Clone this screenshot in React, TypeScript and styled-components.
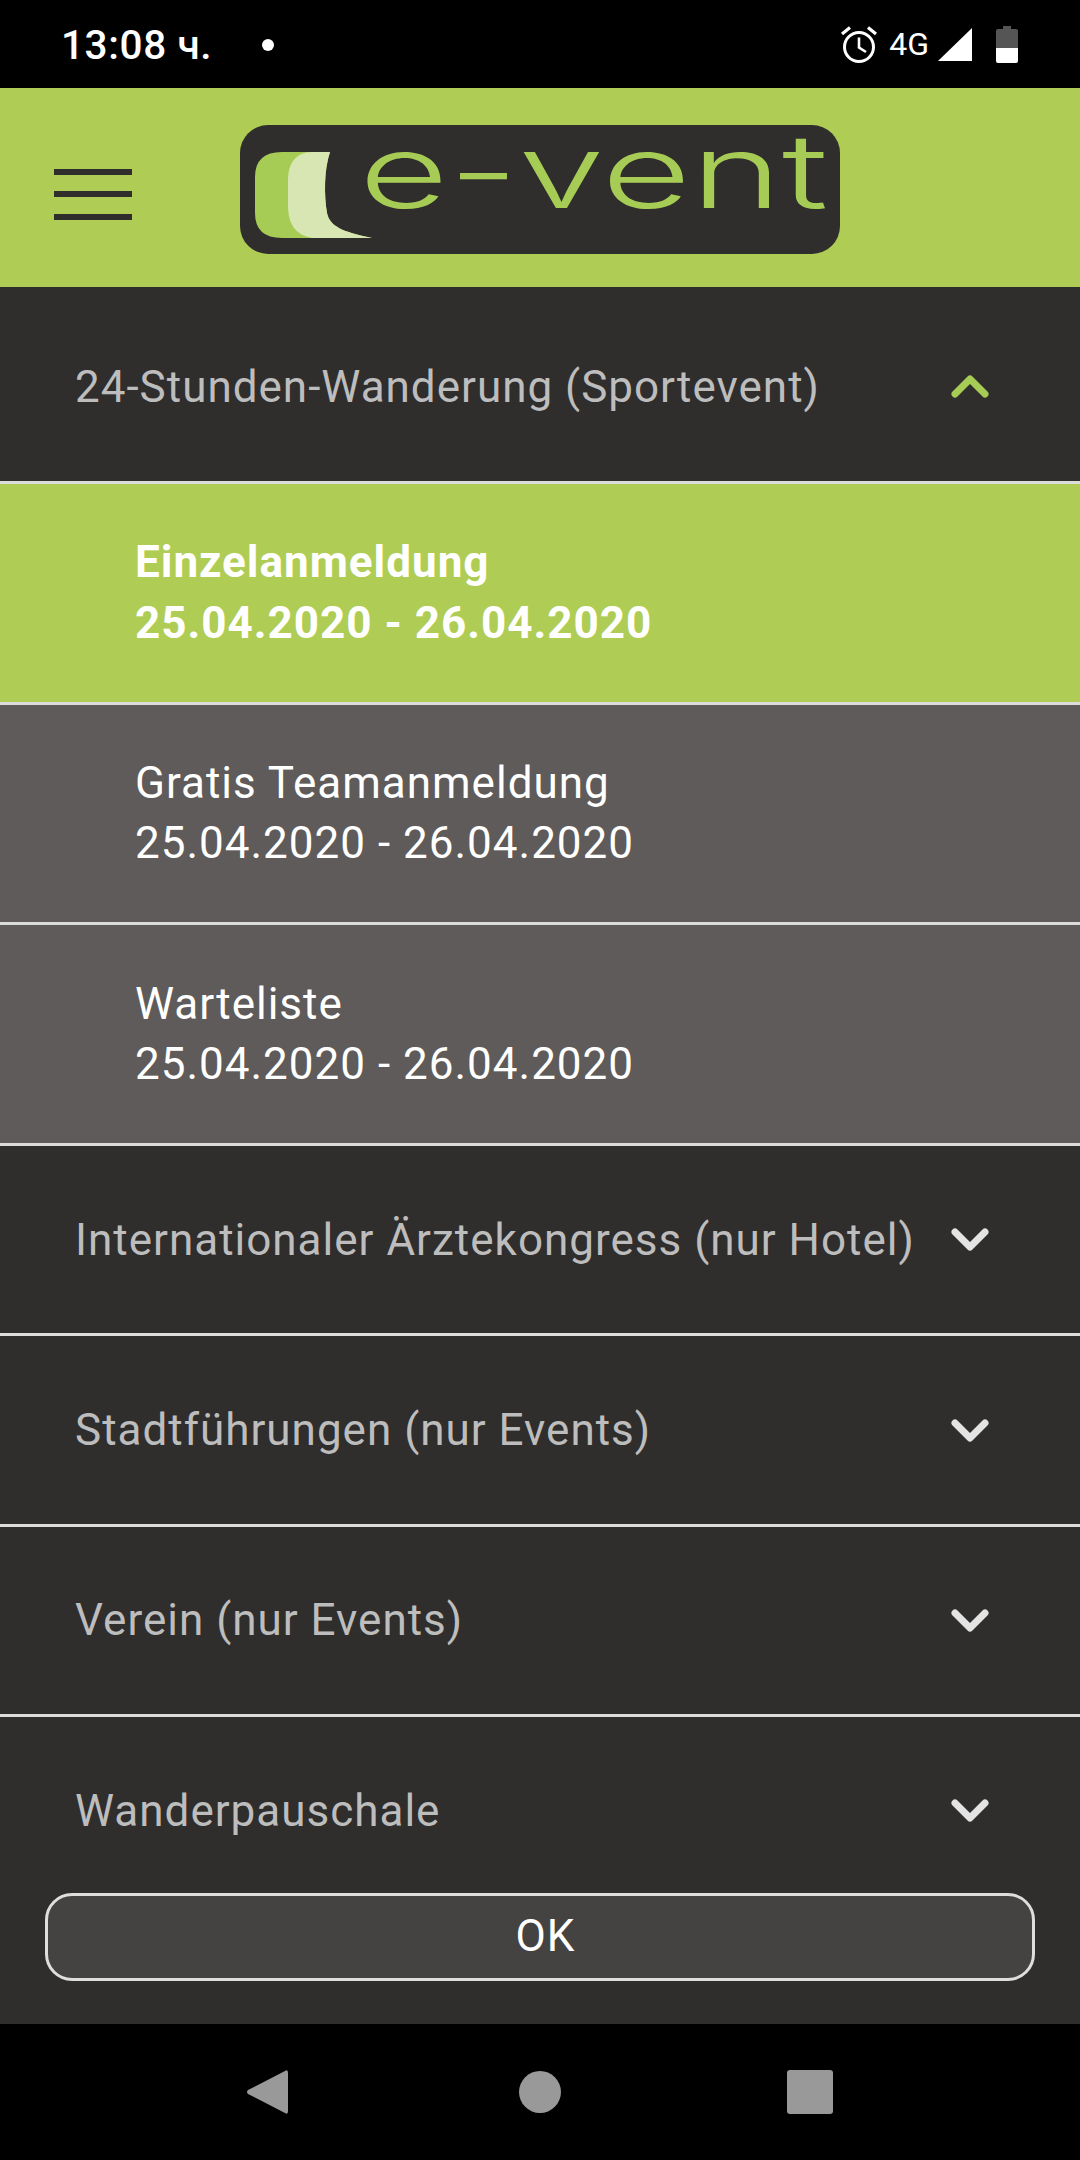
import { createGlobalStyle, styled } from "styled-components";

const GREEN = "#afcd55";
const DARK = "#2f2e2d";

interface ISession {
  title: string;
  active?: boolean;
}

const sessions: ISession[] = [
  { title: "Einzelanmeldung", active: true },
  { title: "Gratis Teamanmeldung" },
  { title: "Warteliste" },
];

const closedEvents = [
  "Internationaler Ärztekongress (nur Hotel)",
  "Stadtführungen (nur Events)",
  "Verein (nur Events)",
  "Wanderpauschale",
];

function Chevron({ open }: { open?: boolean }) {
  return (
    <ChevronIcon viewBox="0 0 38 23" $open={open}>
      <path d={open ? "M4 19 L19 4 L34 19" : "M4 4 L19 19 L34 4"} />
    </ChevronIcon>
  );
}

function App() {
  return (
    <>
      <GlobalStyle />
      <Screen>
        <StatusBar>
          <Clock>13:08 ч.</Clock>
          <NotificationDot />
          <StatusIcons>
            <svg width="36" height="37" viewBox="0 0 36 37">
              <circle cx="18" cy="21" r="14.5" fill="none" stroke="#fff" strokeWidth="3" />
              <path d="M18 11.5 V21.5 L25 26" fill="none" stroke="#fff" strokeWidth="2.6" />
              <path d="M1 8 L9 1.5 M35 8 L27 1.5" stroke="#fff" strokeWidth="3.2" />
            </svg>
            <NetworkLabel>4G</NetworkLabel>
            <svg width="34" height="33" viewBox="0 0 34 33">
              <path d="M34 0 V33 H0 Z" fill="#fff" />
            </svg>
            <BatteryIcon width="22" height="37" viewBox="0 0 22 37">
              <path d="M7 0 H15 V3 H20 Q22 3 22 5 V22 H0 V5 Q0 3 2 3 H7 Z" fill="#555" />
              <path d="M0 22 H22 V35 Q22 37 20 37 H2 Q0 37 0 35 Z" fill="#fff" />
            </BatteryIcon>
          </StatusIcons>
        </StatusBar>

        <Header>
          <Hamburger>
            <span />
            <span />
            <span />
          </Hamburger>
          <Logo viewBox="0 0 600 129">
            <path
              fill="#a6cc55"
              d="M90 27 C84 45 84 70 87 88 C90 104 110 108 132 113 L42 113 Q15 113 15 88 L15 52 Q15 27 42 27 Z"
            />
            <path
              fill="#d8e6b3"
              d="M90 27 C84 45 84 70 87 88 C90 104 110 108 132 113 L72 113 C56 110 48 100 48 80 L48 55 C48 38 56 27 72 27 Z"
            />
            <LogoText x="119" y="83" textLength="469" lengthAdjust="spacingAndGlyphs">
              e-vent
            </LogoText>
          </Logo>
        </Header>

        <Content>
          <EventRow $height={197} $open>
            <EventTitle>24-Stunden-Wanderung (Sportevent)</EventTitle>
            <Chevron open />
          </EventRow>
          {sessions.map((session) => (
            <SessionRow key={session.title} $active={session.active}>
              <span>{session.title}</span>
              <span>25.04.2020 - 26.04.2020</span>
            </SessionRow>
          ))}
          {closedEvents.map((title) => (
            <EventRow key={title} $height={190.4}>
              <EventTitle>{title}</EventTitle>
              <Chevron />
            </EventRow>
          ))}
          <Footer>
            <OkButton>OK</OkButton>
          </Footer>
        </Content>

        <NavBar>
          <svg width="42" height="46" viewBox="0 0 42 46">
            <path d="M39 2 Q42 0 42 4 V42 Q42 46 39 44 L2 25 Q0 23 2 21 Z" fill="#999" />
          </svg>
          <HomeIcon width="42" height="42" viewBox="0 0 42 42">
            <circle cx="21" cy="21" r="21" fill="#999" />
          </HomeIcon>
          <svg width="46" height="44" viewBox="0 0 46 44">
            <rect width="46" height="44" rx="3" fill="#999" />
          </svg>
        </NavBar>
      </Screen>
    </>
  );
}

const GlobalStyle = createGlobalStyle`
  html, body {
    margin: 0;
    padding: 0;
    background: #000;
  }

  * {
    box-sizing: border-box;
  }
`;

const Screen = styled.div`
  display: flex;
  flex-direction: column;
  width: 1080px;
  height: 2160px;
  overflow: hidden;
  font-family: Roboto, "Liberation Sans", sans-serif;
`;

const StatusBar = styled.div`
  display: flex;
  align-items: center;
  flex: none;
  height: 88px;
  padding: 0 62px 0 61px;
  background: #000;
  color: #fff;
`;

const Clock = styled.span`
  margin-top: 3px;
  font-size: 40.5px;
  font-weight: 500;
  letter-spacing: 0.6px;
  line-height: 85px;
`;

const NotificationDot = styled.span`
  width: 12px;
  height: 12px;
  margin-left: 50px;
  margin-top: 2px;
  border-radius: 50%;
  background: #fff;
`;

const StatusIcons = styled.div`
  display: flex;
  align-items: center;
  margin-left: auto;
  gap: 9px;
`;

const NetworkLabel = styled.span`
  font-size: 32px;
  line-height: 32px;
  margin-left: 3px;
`;

const BatteryIcon = styled.svg`
  margin-left: 15px;
`;

const Header = styled.div`
  display: flex;
  align-items: center;
  flex: none;
  height: 199px;
  padding-left: 54px;
  background: ${GREEN};
`;

const Hamburger = styled.div`
  display: flex;
  flex-direction: column;
  gap: 16.5px;
  width: 78px;
  margin-top: 13px;

  span {
    display: block;
    height: 6px;
    background: ${DARK};
  }
`;

const Logo = styled.svg`
  width: 600px;
  height: 129px;
  margin-left: 108px;
  margin-top: 3px;
  border-radius: 28px;
  background: ${DARK};
  overflow: visible;
`;

const LogoText = styled.text`
  fill: #a6cc55;
  font-family: Inter, sans-serif;
  font-size: 102px;
  font-weight: 300;
`;

const Content = styled.div`
  position: relative;
  flex: 1;
  overflow: hidden;
  background: ${DARK};
`;

const EventRow = styled.div<{ $height: number; $open?: boolean }>`
  display: flex;
  align-items: center;
  justify-content: space-between;
  height: ${({ $height }) => $height}px;
  padding: ${({ $open }) => ($open ? "5px" : "0")} 91px 0 75px;
  border-bottom: 3px solid #dcdcdc;
`;

const EventTitle = styled.span`
  color: #bdbdbd;
  font-size: 44px;
  letter-spacing: 1px;
  white-space: nowrap;
`;

const ChevronIcon = styled.svg<{ $open?: boolean }>`
  flex: none;
  width: 38px;
  height: 23px;

  path {
    fill: none;
    stroke: ${({ $open }) => ($open ? "#a6cc55" : "#e4e4e4")};
    stroke-width: 7px;
    stroke-linecap: round;
    stroke-linejoin: round;
  }
`;

const SessionRow = styled.div<{ $active?: boolean }>`
  display: flex;
  flex-direction: column;
  justify-content: center;
  height: 220.67px;
  padding-left: 135px;
  border-bottom: 3px solid #dcdcdc;
  background: ${({ $active }) => ($active ? GREEN : "#5e5b5a")};
  color: #fff;
  font-size: 44px;
  font-weight: ${({ $active }) => ($active ? 700 : 400)};
  letter-spacing: 1px;
  line-height: 60.5px;
`;

const Footer = styled.div`
  position: absolute;
  left: 0;
  right: 0;
  bottom: 0;
  padding: 12px 45px 43px;
  background: ${DARK};
`;

const OkButton = styled.button`
  display: block;
  width: 100%;
  height: 88px;
  padding: 0 0 2px 11px;
  border: 3px solid #dedede;
  border-radius: 27px;
  background: #444342;
  color: #fff;
  font-family: Roboto, "Liberation Sans", sans-serif;
  font-size: 44px;
  letter-spacing: 1px;
`;

const NavBar = styled.div`
  display: flex;
  align-items: center;
  justify-content: center;
  flex: none;
  height: 136px;
  padding-right: 2px;
  gap: 226px;
  background: #000;
`;

const HomeIcon = styled.svg`
  margin-left: 5px;
`;

export default App;
